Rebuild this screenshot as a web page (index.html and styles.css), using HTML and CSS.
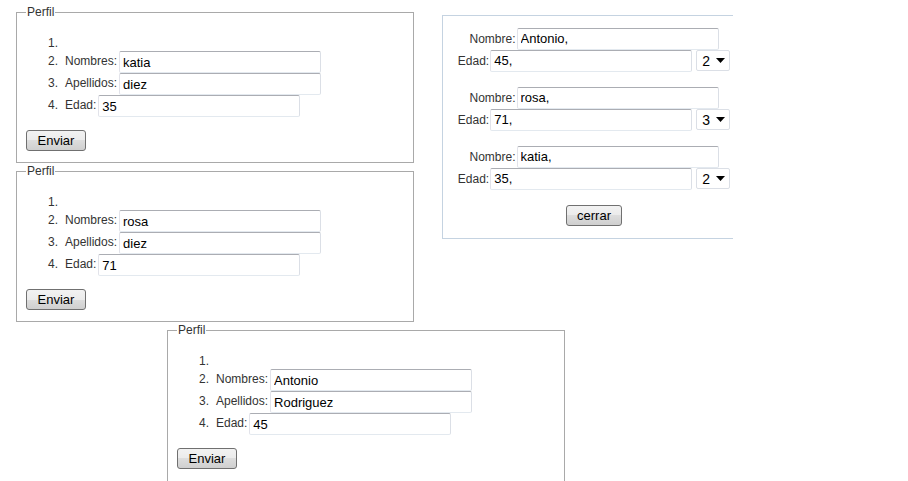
FILE: index.html
```html
<!DOCTYPE html>
<html lang="es">
<head>
<meta charset="utf-8">
<title>Perfil</title>
<link rel="stylesheet" href="styles.css">
</head>
<body>
<div class="page">
  <div class="top">
    <div class="col">
      <fieldset class="perfil">
        <legend>Perfil</legend>
        <ol>
          <li></li>
          <li><label>Nombres:</label><input type="text" value="katia" class="nom"></li>
          <li><label>Apellidos:</label><input type="text" value="diez" class="ape"></li>
          <li><label>Edad:</label><input type="text" value="35" class="edad"></li>
        </ol>
        <button class="btn enviar">Enviar</button>
      </fieldset>
      <fieldset class="perfil">
        <legend>Perfil</legend>
        <ol>
          <li></li>
          <li><label>Nombres:</label><input type="text" value="rosa" class="nom"></li>
          <li><label>Apellidos:</label><input type="text" value="diez" class="ape"></li>
          <li><label>Edad:</label><input type="text" value="71" class="edad"></li>
        </ol>
        <button class="btn enviar">Enviar</button>
      </fieldset>
    </div>
    <div class="panel">
      <div class="group">
        <div class="row"><label>Nombre:</label><input type="text" value="Antonio,"></div>
        <div class="row"><label>Edad:</label><input type="text" value="45,"><span class="sel">2<svg width="9" height="5" viewBox="0 0 9 5"><path d="M0 0h9L4.5 5z" fill="#000"/></svg></span></div>
      </div>
      <div class="group">
        <div class="row"><label>Nombre:</label><input type="text" value="rosa,"></div>
        <div class="row"><label>Edad:</label><input type="text" value="71,"><span class="sel">3<svg width="9" height="5" viewBox="0 0 9 5"><path d="M0 0h9L4.5 5z" fill="#000"/></svg></span></div>
      </div>
      <div class="group">
        <div class="row"><label>Nombre:</label><input type="text" value="katia,"></div>
        <div class="row"><label>Edad:</label><input type="text" value="35,"><span class="sel">2<svg width="9" height="5" viewBox="0 0 9 5"><path d="M0 0h9L4.5 5z" fill="#000"/></svg></span></div>
      </div>
      <div class="actions"><button class="btn cerrar">cerrar</button></div>
    </div>
  </div>
  <fieldset class="perfil offset">
    <legend>Perfil</legend>
    <ol>
      <li></li>
      <li><label>Nombres:</label><input type="text" value="Antonio" class="nom"></li>
      <li><label>Apellidos:</label><input type="text" value="Rodriguez" class="ape"></li>
      <li><label>Edad:</label><input type="text" value="45" class="edad"></li>
    </ol>
    <button class="btn enviar">Enviar</button>
  </fieldset>
</div>
</body>
</html>
```
FILE: styles.css
```css
html, body {
  margin: 0;
  background: #fff;
}
body {
  font-family: "Liberation Sans", Arial, sans-serif;
  font-size: 12px;
  color: #333;
  overflow: hidden;
}
.page {
  padding: 5px 0 0 16px;
}
.top {
  display: flex;
  align-items: flex-start;
}
.col {
  display: flex;
  flex-direction: column;
}
.perfil {
  box-sizing: border-box;
  width: 398px;
  margin: 0 0 1px 0;
  padding: 0 9px 11px 9px;
  border: 1px solid #a9a9a9;
  min-inline-size: 0;
}
.perfil.offset {
  margin-left: 151px;
  padding-bottom: 20px;
}
.perfil legend {
  padding: 0 1px;
  font-size: 12px;
  line-height: 14px;
  color: #333;
}
.perfil ol {
  margin: 14px 0 0 0;
  padding: 0 0 0 39px;
  list-style: none;
  counter-reset: item;
}
.perfil li {
  line-height: 18px;
  min-height: 18px;
  counter-increment: item;
}
.perfil li:first-child {
  height: 18px;
  line-height: 21px;
}
.perfil li::before {
  content: counter(item) ".";
  display: inline-block;
  width: 17px;
  margin-left: -17px;
  color: #333;
}
.perfil li label {
  margin-right: 2px;
}
input[type="text"] {
  box-sizing: border-box;
  width: 202px;
  height: 22px;
  margin: 0;
  padding: 1px 3px;
  border: 1px solid;
  border-color: #abadb3 #dbdfe6 #e3e9ef #e2e3ea;
  border-radius: 2px;
  font-family: "Liberation Sans", Arial, sans-serif;
  font-size: 13px;
  color: #000;
  vertical-align: middle;
  background: #fff;
}
.btn {
  box-sizing: border-box;
  height: 21px;
  padding: 0;
  border: 1px solid #707070;
  border-radius: 3px;
  background: linear-gradient(#f2f2f2 0%, #ebebeb 50%, #dddddd 50%, #cfcfcf 100%);
  font-family: "Liberation Sans", Arial, sans-serif;
  font-size: 13px;
  color: #000;
}
.enviar {
  display: block;
  width: 60px;
  margin: 13px 0 0 0;
}
.panel {
  box-sizing: border-box;
  width: 291px;
  height: 224px;
  margin: 10px 0 0 28px;
  padding: 11px 0 0 12px;
  border: 1px solid #c5d3e1;
  border-right: none;
}
.group {
  text-align: center;
}
.group + .group {
  margin-top: 15px;
}
.row {
  height: 22px;
  line-height: 22px;
  white-space: nowrap;
}
.row label {
  margin-right: 1px;
  vertical-align: middle;
}
.sel {
  box-sizing: border-box;
  display: inline-flex;
  align-items: center;
  justify-content: space-between;
  width: 34px;
  height: 21px;
  margin-left: 4px;
  padding: 0 4px 0 5px;
  border: 1px solid #dbdfe6;
  border-radius: 2px;
  font-size: 14px;
  color: #000;
  vertical-align: middle;
  background: #fff;
}
.actions {
  text-align: center;
  margin-top: 16px;
}
.cerrar {
  width: 56px;
}
```
